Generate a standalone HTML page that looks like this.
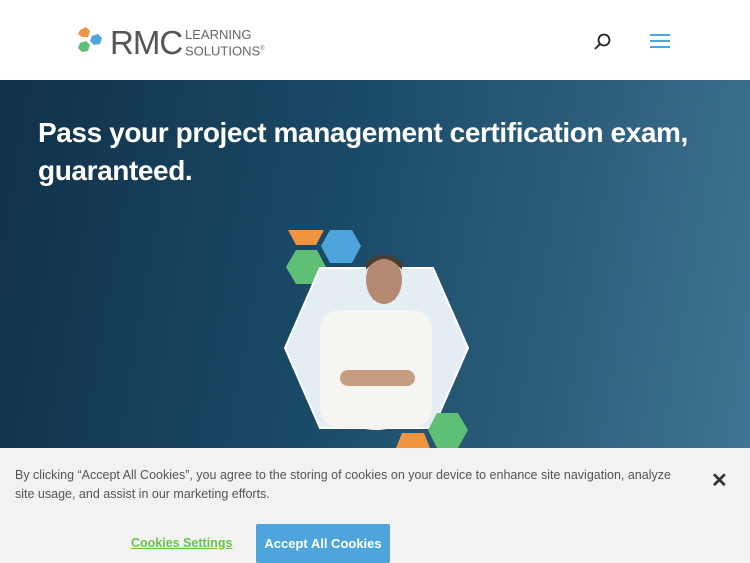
<!DOCTYPE html>
<html><head><style>
*{margin:0;padding:0;box-sizing:border-box}
body{width:750px;height:563px;overflow:hidden;font-family:"Liberation Sans",sans-serif;background:#fff;position:relative}
.hdr{height:80px;background:#fff;position:relative}
.hero{position:absolute;top:80px;left:0;width:750px;height:368px;background:linear-gradient(100deg,#113149 0%,#1a4a68 45%,#2d5f7d 75%,#3f7592 100%);overflow:hidden}
h1{position:absolute;left:38px;top:34px;color:#fff;font-size:28px;font-weight:bold;letter-spacing:-0.4px;line-height:38px;white-space:nowrap}
.ck{position:absolute;top:448px;left:0;width:750px;height:115px;background:#f2f2f2}
.ck p{position:absolute;left:15px;top:18px;width:668px;font-size:12.5px;line-height:19px;color:#555}
.x{position:absolute;left:711px;top:20px;font-size:20px;color:#333;font-weight:bold}
.cs{position:absolute;left:131px;top:88px;color:#6cc04a;font-weight:bold;font-size:12.5px;text-decoration:underline}
.ac{position:absolute;left:256px;top:76px;width:134px;height:39px;background:#4ea5dc;color:#fff;font-weight:bold;font-size:13px;text-align:center;line-height:39px;border-radius:2px}
</style></head><body>
<div class="hdr">
<svg style="position:absolute;left:77px;top:27px" width="30" height="28"><polygon points="3,3 9,0 13,4 11,10 5,10 1,7" fill="#f0943f"/><polygon points="15,9 21,7 25,11 23,17 17,18 13,14" fill="#4ea5dc"/><polygon points="3,16 9,14 13,18 11,24 5,25 1,21" fill="#5fbf74"/></svg>
<div style="position:absolute;left:110px;top:24px;font-size:33px;color:#555;letter-spacing:-1px">RMC</div>
<div style="position:absolute;left:185px;top:28px;font-size:13px;color:#666;line-height:14px">LEARNING<br>SOLUTIONS<sup style="font-size:6px">®</sup></div>
<svg style="position:absolute;left:594px;top:33px" width="18" height="18"><circle cx="10" cy="7" r="5.5" fill="none" stroke="#222" stroke-width="1.8"/><line x1="6" y1="11" x2="1" y2="16" stroke="#222" stroke-width="1.8"/></svg>
<svg style="position:absolute;left:650px;top:34px" width="20" height="14"><rect y="0" width="20" height="2" fill="#4ea5dc"/><rect y="6" width="20" height="2" fill="#4ea5dc"/><rect y="12" width="20" height="2" fill="#4ea5dc"/></svg>
</div>
<div class="hero">
<h1>Pass your project management certification exam,<br>guaranteed.</h1>
<svg width="750" height="368" style="position:absolute;left:0;top:0">
<polygon points="288,150 324,150 316,165 296,165" fill="#f0943f"/>
<polygon points="330,150 352,150 361,166 352,183 330,183 321,166" fill="#4ea5dc"/>
<polygon points="296,170 317,170 326,187 317,204 296,204 286,187" fill="#5fbf74"/>
<polygon points="320,188 433,188 468,268 433,348 320,348 285,268" fill="#e4edf3" stroke="#fff" stroke-width="2"/>
<ellipse cx="376" cy="300" rx="56" ry="50" fill="#f4f3ef"/>
<ellipse cx="384" cy="200" rx="18" ry="24" fill="#b48a72"/>
<path d="M366 190 q18 -22 36 0 l0 -8 q-18 -14 -36 0z" fill="#4a3b33"/>
<rect x="320" y="230" width="112" height="118" rx="20" fill="#f6f5f1"/>
<rect x="340" y="290" width="75" height="16" rx="8" fill="#c79d82"/>
<polygon points="437,333 458,333 468,350 458,368 437,368 428,350" fill="#5fbf74"/>
<polygon points="402,353 424,353 430,368 396,368" fill="#f0943f"/>
</svg>
</div>
<div class="ck">
<p>By clicking “Accept All Cookies”, you agree to the storing of cookies on your device to enhance site navigation, analyze site usage, and assist in our marketing efforts.</p>
<div class="x">✕</div>
<div class="cs">Cookies Settings</div>
<div class="ac">Accept All Cookies</div>
</div>
</body></html>
